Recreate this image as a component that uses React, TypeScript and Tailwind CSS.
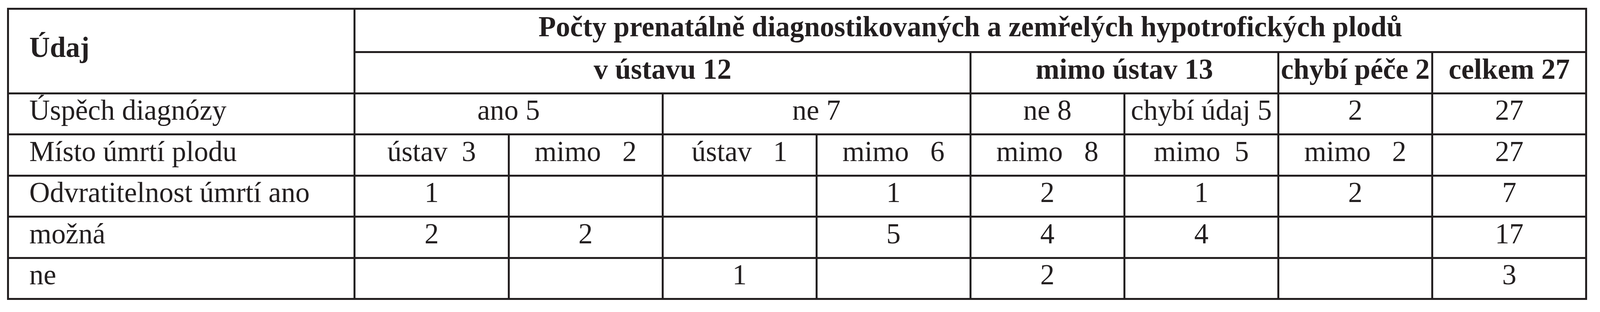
const rows: { label: string; h: string; cells: { text: string; span?: number }[] }[] = [
  {
    label: 'Úspěch diagnózy',
    h: 'h-[105px]',
    cells: [
      { text: 'ano 5', span: 2 },
      { text: 'ne 7', span: 2 },
      { text: 'ne 8' },
      { text: 'chybí údaj 5' },
      { text: '2' },
      { text: '27' },
    ],
  },
  {
    label: 'Místo úmrtí plodu',
    h: 'h-[106px]',
    cells: [
      { text: 'ústav  3' },
      { text: 'mimo   2' },
      { text: 'ústav   1' },
      { text: 'mimo   6' },
      { text: 'mimo   8' },
      { text: 'mimo  5' },
      { text: 'mimo   2' },
      { text: '27' },
    ],
  },
  {
    label: 'Odvratitelnost úmrtí ano',
    h: 'h-[105px]',
    cells: ['1', '', '', '1', '2', '1', '2', '7'].map(text => ({ text })),
  },
  {
    label: 'možná',
    h: 'h-[106px]',
    cells: ['2', '2', '', '5', '4', '4', '', '17'].map(text => ({ text })),
  },
  {
    label: 'ne',
    h: 'h-[105px]',
    cells: ['', '', '1', '', '2', '', '', '3'].map(text => ({ text })),
  },
]

// every cell: thick dark rule, text lifted a little above centre like the print
const cell = 'border-[5px] border-[#231f20] align-middle pb-[18px] pt-0 px-0 whitespace-pre'

export default function App() {
  return (
    <div className="bg-white w-full h-[800px] pt-[20px] text-[#231f20] font-['Liberation_Serif','Times_New_Roman',serif] text-[73px] leading-[82px]">
      <table className="table-fixed border-collapse w-[98.75%] ml-[0.45%]">
        <colgroup>
          <col className="w-[21.956%]" />
          {Array.from({ length: 8 }).map((_, i) => (
            <col key={i} className="w-[9.7555%]" />
          ))}
        </colgroup>
        <thead>
          <tr className="h-[111px]">
            <th rowSpan={2} className={`${cell} text-left font-bold pl-[1.26vw] pb-[12px]`}>
              Údaj
            </th>
            <th colSpan={8} className={`${cell} text-center font-bold`}>
              Počty prenatálně diagnostikovaných a zemřelých hypotrofických plodů
            </th>
          </tr>
          <tr className="h-[106px]">
            <th colSpan={4} className={`${cell} text-center font-bold`}>v ústavu 12</th>
            <th colSpan={2} className={`${cell} text-center font-bold`}>mimo ústav 13</th>
            <th className={`${cell} text-center font-bold`}>chybí péče 2</th>
            <th className={`${cell} text-center font-bold`}>celkem 27</th>
          </tr>
        </thead>
        <tbody>
          {rows.map(row => (
            <tr key={row.label} className={row.h}>
              <td className={`${cell} text-left pl-[1.26vw]`}>{row.label}</td>
              {row.cells.map((c, i) => (
                <td key={i} colSpan={c.span} className={`${cell} text-center`}>
                  {c.text}
                </td>
              ))}
            </tr>
          ))}
        </tbody>
      </table>
    </div>
  )
}
